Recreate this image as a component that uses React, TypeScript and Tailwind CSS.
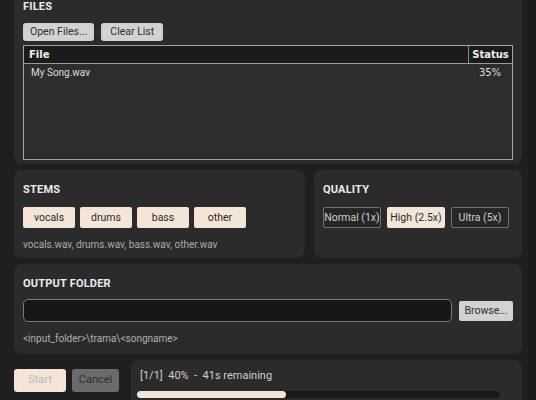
import React from "react";

const stems = ["vocals", "drums", "bass", "other"];
const qualities = [
  { label: "Normal (1x)", active: false },
  { label: "High (2.5x)", active: true },
  { label: "Ultra (5x)", active: false },
];

function Panel({ className = "", children }: { className?: string; children: React.ReactNode }) {
  return <div className={`shrink-0 rounded-[8px] bg-[#2b2b2b] ${className}`}>{children}</div>;
}

function Heading({ children }: { children: React.ReactNode }) {
  return <h2 className="text-[11px] font-bold uppercase leading-none tracking-[0.2px] text-[#ececec]">{children}</h2>;
}

export default function App() {
  return (
    <div
      className="flex h-[400px] w-[536px] overflow-hidden bg-[#1f1f1f] text-[#dcdcdc]"
      style={{ fontFamily: "Roboto, 'Noto Sans', sans-serif" }}
    >
      <div className="flex w-[528px] flex-col gap-[6px] pl-[14px] pr-[6px]">
        {/* Files */}
        <Panel className="-mt-[6px] px-[9px] pb-[4px] pt-[7px]">
          <Heading>Files</Heading>
          <div className="mt-[11px] flex gap-[7px]">
            <button className="h-[18px] rounded-[3px] bg-[#d2d2d2] px-[7px] text-[10.5px] text-[#2e2e2e]">Open Files...</button>
            <button className="h-[18px] rounded-[3px] bg-[#d2d2d2] px-[9px] text-[10.5px] text-[#2e2e2e]">Clear List</button>
          </div>
          <div className="mt-[4px] h-[115px] border border-[#a2a2a2] bg-[#2d2d2d]">
            <div
              className="flex h-[18px] border-b border-[#9a9a9a] bg-[#1b1b1b] text-[10px] font-bold text-[#f0f0f0]"
              style={{ fontFamily: "'DejaVu Sans', sans-serif" }}
            >
              <div className="flex flex-1 items-center pl-[5px]">File</div>
              <div className="flex w-[44px] items-center justify-center border-l border-[#8a8a8a]">Status</div>
            </div>
            <div className="flex h-[17px] items-center text-[10px] text-[#dedede]">
              <div className="flex-1 pl-[7px]">My Song.wav</div>
              <div className="w-[44px] text-center" style={{ fontFamily: "'DejaVu Sans', sans-serif" }}>35%</div>
            </div>
          </div>
        </Panel>

        {/* Stems & Quality */}
        <div className="flex shrink-0 gap-[9px]">
          <Panel className="h-[88px] w-[291px] px-[9px] pt-[14px]">
            <Heading>Stems</Heading>
            <div className="mt-[12px] flex gap-[5px]">
              {stems.map((s) => (
                <button key={s} className="h-[21px] w-[52px] rounded-[2px] bg-[#f3e6d8] text-[10.5px] text-[#2a2a2a]">
                  {s}
                </button>
              ))}
            </div>
            <p className="mt-[9px] text-[10px] text-[#ababab]">vocals.wav, drums.wav, bass.wav, other.wav</p>
          </Panel>
          <Panel className="h-[88px] flex-1 px-[9px] pt-[14px]">
            <Heading>Quality</Heading>
            <div className="mt-[12px] flex gap-[6px]">
              {qualities.map((q) => (
                <button
                  key={q.label}
                  className={
                    q.active
                      ? "h-[21px] w-[58px] rounded-[2px] bg-[#f3e6d8] text-[10.5px] text-[#2a2a2a]"
                      : "h-[21px] w-[58px] rounded-[2px] border border-[#6f6f6f] bg-[#262626] text-[10.5px] text-[#cfcfcf]"
                  }
                >
                  {q.label}
                </button>
              ))}
            </div>
          </Panel>
        </div>

        {/* Output folder */}
        <Panel className="h-[90px] px-[9px] pt-[14px]">
          <Heading>Output Folder</Heading>
          <div className="mt-[10px] flex items-center gap-[7px]">
            <div className="h-[23px] flex-1 rounded-[5px] border border-[#7a7a7a] bg-[#171717]" />
            <button className="h-[20px] w-[54px] rounded-[2px] bg-[#d2d2d2] text-[10.5px] text-[#2e2e2e]">Browse...</button>
          </div>
          <p className="mt-[9px] text-[10px] text-[#b0b0b0]">&lt;input_folder&gt;\trama\&lt;songname&gt;</p>
        </Panel>

        {/* Actions & progress */}
        <div className="flex shrink-0 gap-[12px]">
          <div className="flex gap-[6px] pt-[9px]">
            <button className="h-[23px] w-[52px] rounded-[3px] bg-[#f3e6d8] text-[11px] text-[#bdb5ac]">Start</button>
            <button className="h-[23px] w-[47px] rounded-[3px] bg-[#6b6b6b] text-[11px] text-[#2e2e2e]">Cancel</button>
          </div>
          <Panel className="h-[60px] flex-1 px-[6px] pt-[8px]">
            <p className="pl-[3px] text-[11px] text-[#cfcfcf]">[1/1]&nbsp; 40% &nbsp;-&nbsp; 41s remaining</p>
            <div className="mt-[6px] h-[7px] w-[363px] rounded-full bg-[#191919]">
              <div className="h-full rounded-full bg-[#f3e6d8]" style={{ width: "41%" }} />
            </div>
          </Panel>
        </div>
      </div>
      <div className="w-[8px] bg-[#191919]" />
    </div>
  );
}
